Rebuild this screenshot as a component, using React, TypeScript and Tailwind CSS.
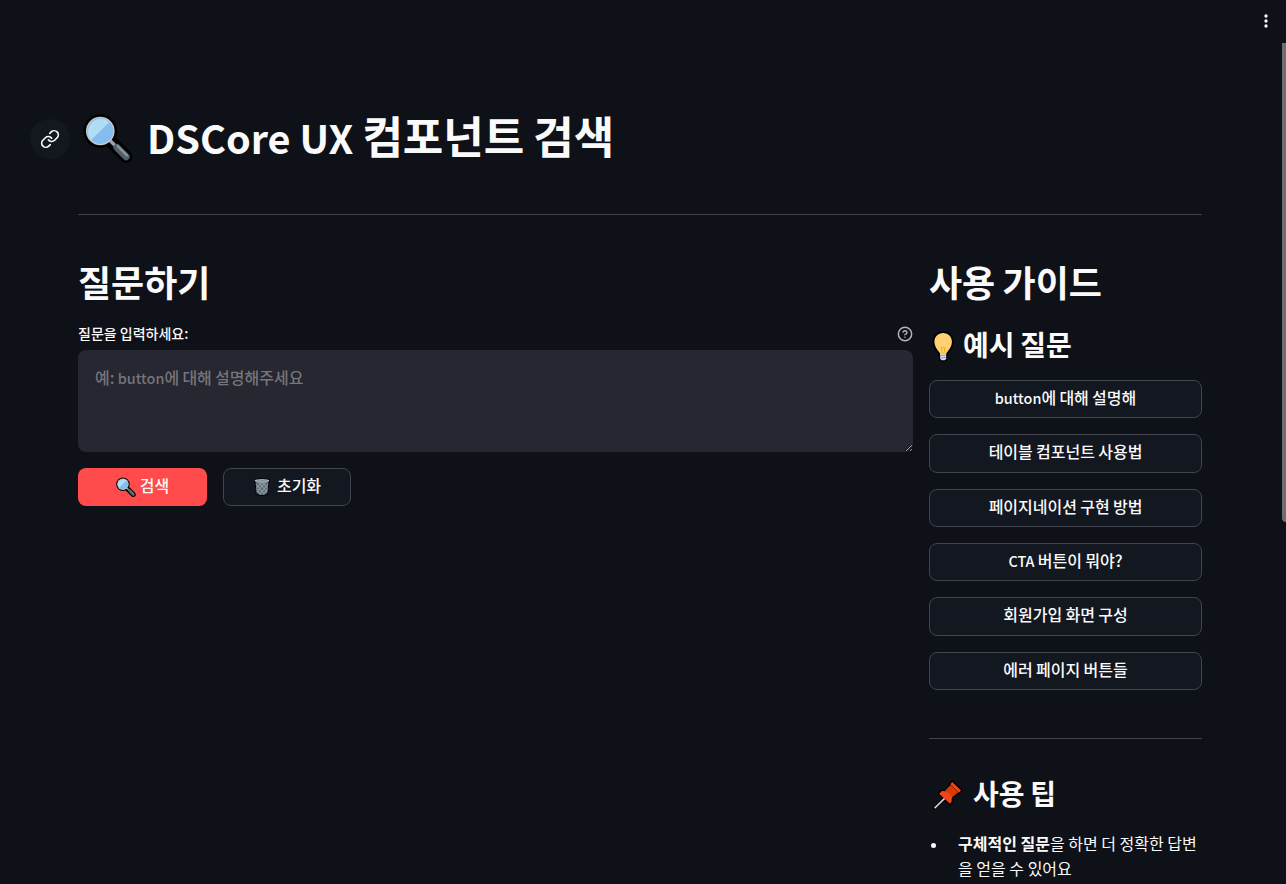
import { CircleHelp, Link as LinkIcon } from "lucide-react";

const exampleQuestions = [
  "button에 대해 설명해",
  "테이블 컴포넌트 사용법",
  "페이지네이션 구현 방법",
  "CTA 버튼이 뭐야?",
  "회원가입 화면 구성",
  "에러 페이지 버튼들",
];

function Magnifier({ className }: { className: string }) {
  return (
    <svg viewBox="0 0 50 50" className={className} aria-hidden="true">
      <circle cx="17.3" cy="18" r="16.8" fill="#000" />
      <path d="M28 28.5L43 43.5" stroke="#000" strokeWidth="12.5" strokeLinecap="round" />
      <path d="M27 27.5L34 34.5" stroke="#9aa5ab" strokeWidth="3.4" />
      <path d="M34 34.5L43.2 43.7" stroke="#50616b" strokeWidth="7" strokeLinecap="round" />
      <path d="M34.5 33L44 42.5" stroke="#8b979d" strokeWidth="2.2" strokeLinecap="round" />
      <circle cx="17.3" cy="18" r="14.3" fill="#c9c9cb" />
      <circle cx="17.3" cy="18" r="12.9" fill="#83bdee" />
      <path d="M8.2 27.1A12.9 12.9 0 0 1 26.4 8.9Z" fill="#b2dbf4" />
    </svg>
  );
}

function Bulb({ className }: { className: string }) {
  return (
    <svg viewBox="38 242 66 92" className={className} aria-hidden="true">
      <path
        d="M70 243c-18 0-31 13-31 31 0 12 5 21 11 29 5 7 8 11 8 17v6c0 5 5 8 12 8s12-3 12-8v-6c0-6 3-10 8-17 6-8 11-17 11-29 0-18-13-31-31-31z"
        fill="#000"
      />
      <path
        d="M70 248c-15 0-26 11-26 26 0 11 5 18 10 25 4 5 7 9 7 11h18c0-2 3-6 7-11 5-7 10-14 10-25 0-15-11-26-26-26z"
        fill="#ffd172"
      />
      <path d="M64 292l4 17M76 292l-4 17M63 292h14" stroke="#ffad00" strokeWidth="3" fill="none" />
      <path d="M61 310h18v14l-4 5h-10l-4-5z" fill="#d9dde0" />
      <path d="M61 316l18-3M61 323l18-3" stroke="#77838b" strokeWidth="2" />
    </svg>
  );
}

function Pin({ className }: { className: string }) {
  return (
    <svg viewBox="35 178 98 98" className={className} aria-hidden="true">
      <g stroke="#000" strokeWidth="10" strokeLinejoin="round" strokeLinecap="round" fill="#000">
        <path d="M76 235L43 267" />
        <path d="M97 187L124 213L115 219L96 231L95 248L90 254L57 221L64 215L81 216L92 200L91 194Z" />
      </g>
      <path d="M76 235L43 267" stroke="#ccd1d4" strokeWidth="5" />
      <path d="M92 196L115 219L94 236L73 216Z" fill="#d83b01" />
      <path d="M97 187L124 213L117 220L91 194Z" fill="#f4431c" />
      <path d="M57 223L66 214L81 218L96 233L95 247L90 254Z" fill="#f4431c" />
    </svg>
  );
}

function TrashCan({ className }: { className: string }) {
  return (
    <svg viewBox="0 0 18 18" className={className} aria-hidden="true">
      <path d="M1 1.5Q9-.9 17 1.5V5H16.2L15.2 16.2Q9 19.2 2.8 16.2L1.8 5H1Z" fill="#000" />
      <path d="M2.6 4H15.4L14.3 15.5Q9 17.8 3.7 15.5Z" fill="#5f6f78" />
      <path
        d="M2.8 6l9 10.600M5.5 4l8.8 10M9 4l5.8 6.500M3.3 11l5 6M15.2 6l-9 10.600M12.5 4l-8.8 10M9 4l-5.8 6.500M14.7 11l-5 6"
        stroke="#98a3a9"
        strokeWidth="0.9"
      />
      <ellipse cx="9" cy="2.8" rx="7.4" ry="1.7" fill="#a8b2b8" />
      <ellipse cx="9" cy="2.9" rx="5.8" ry="0.7" fill="#7b888f" />
    </svg>
  );
}

function MixedText({ text }: { text: string }) {
  return (
    <>
      {text.split(/([A-Za-z ]+)/).map((part, index) =>
        index % 2 === 1 ? (
          <span key={index} className="text-[0.9em]">
            {part}
          </span>
        ) : (
          part
        ),
      )}
    </>
  );
}

export default function App() {
  const outlined = "rounded-lg border border-[#41444c] bg-[#131720] hover:border-[#ff4b4b] hover:text-[#ff4b4b]";

  return (
    <div className="relative min-h-screen bg-[#0e1117] font-['Noto_Sans_CJK_KR',sans-serif] text-base text-[#fafafa]">
      <button type="button" aria-label="메뉴" className="absolute top-[9px] right-2 grid h-6 w-6 place-items-center">
        <svg viewBox="0 0 24 24" className="h-5 w-5" fill="#fafafa" aria-hidden="true">
          <circle cx="12" cy="6" r="2" />
          <circle cx="12" cy="12" r="2" />
          <circle cx="12" cy="18" r="2" />
        </svg>
      </button>
      <div className="absolute top-[43px] right-0 h-[479px] w-1 rounded-bl-sm bg-[#6d6e70]" />

      <main className="pt-[109px] pr-[84px] pl-[78px]">
        <header className="-ml-12 flex h-[53px] items-center">
          <a
            href="#search"
            aria-label="제목 링크"
            className="mt-[6px] grid h-10 w-10 place-items-center rounded-full bg-[#131720]"
          >
            <LinkIcon className="h-5 w-5" strokeWidth={2} />
          </a>
          <h1 id="search" className="ml-[13px] flex items-center text-[44px] leading-[53px] font-bold">
            <Magnifier className="mt-1 mr-[14px] h-[50px] w-[50px]" />
            <span>
              <MixedText text="DSCore UX 컴포넌트 검색" />
            </span>
          </h1>
        </header>

        <hr className="mt-[52px] border-[#404247]" />

        <div className="mt-[45px] grid grid-cols-[1fr_273px] gap-4">
          <section>
            <h2 className="text-4xl leading-[43px] font-bold">질문하기</h2>
            <div className="mt-[21px] flex h-5 items-center justify-between">
              <label htmlFor="question" className="pb-0.5 text-sm leading-5 font-medium">
                질문을 입력하세요:
              </label>
              <button type="button" aria-label="도움말" className="text-[#b4b5b8]">
                <CircleHelp className="h-4 w-4" strokeWidth={2.2} />
              </button>
            </div>
            <div className="relative mt-[6px]">
              <textarea
                id="question"
                placeholder=" "
                className="peer block h-[102px] w-full resize-y rounded-lg bg-[#262730] px-[17px] py-4 leading-6 outline-none"
              />
              <span
                aria-hidden="true"
                className="pointer-events-none absolute top-[15px] left-[17px] leading-6 font-medium text-[#75757b] peer-[:not(:placeholder-shown)]:hidden"
              >
                <MixedText text="예: button에 대해 설명해주세요" />
              </span>
            </div>
            <div className="mt-4 grid grid-cols-[129px_128px] gap-4">
              <button
                type="button"
                className="flex h-[38px] items-center justify-center gap-1 rounded-lg bg-[#ff4b4b] pb-1 leading-6 font-medium"
              >
                <Magnifier className="mt-[3px] h-5 w-5" />
                검색
              </button>
              <button
                type="button"
                className={`flex h-[38px] items-center justify-center gap-[6px] pb-1 leading-6 font-medium ${outlined}`}
              >
                <TrashCan className="mt-[3px] h-[18px] w-[18px]" />
                초기화
              </button>
            </div>
          </section>

          <aside>
            <h2 className="h-[43px] text-4xl leading-[43px] font-bold">
              <MixedText text="사용 가이드" />
            </h2>
            <h3 className="mt-6 flex h-[34px] items-center text-[28px] leading-[34px] font-bold">
              <Bulb className="mt-1 mr-2 ml-[3px] h-[31px] w-[23px]" />
              <span>
                <MixedText text="예시 질문" />
              </span>
            </h3>
            <div className="mt-[19px] flex h-[310px] flex-col gap-4">
              {exampleQuestions.map((question) => (
                <button key={question} type="button" className={`flex-1 pb-[3px] leading-6 font-medium ${outlined}`}>
                  <MixedText text={question} />
                </button>
              ))}
            </div>
            <hr className="mt-12 border-[#404247]" />
            <h3 className="mt-[37px] flex h-[34px] items-center text-[28px] leading-[34px] font-bold">
              <Pin className="mt-1 mr-[9px] ml-[3px] h-8 w-8" />
              <span>
                <MixedText text="사용 팁" />
              </span>
            </h3>
            <ul className="mt-[21px] pl-[29px] leading-[25px]">
              <li className="relative before:absolute before:top-3 before:-left-[27px] before:h-[5px] before:w-[5px] before:rounded-full before:bg-[#fafafa]">
                <strong>구체적인 질문</strong>을 하면 더 정확한 답변을 얻을 수 있어요
              </li>
            </ul>
          </aside>
        </div>
      </main>
    </div>
  );
}
